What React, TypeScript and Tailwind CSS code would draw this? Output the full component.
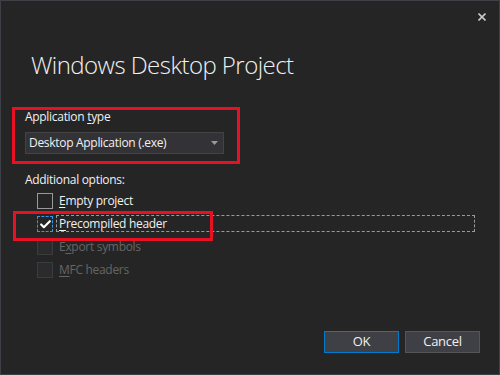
import { Check } from "lucide-react";

const FONT = "font-['Open_Sans','Noto_Sans',sans-serif]";

function Box({ state }: { state: "off" | "on" | "disabled" }) {
  if (state === "on") {
    return (
      <span className="w-[16px] h-[16px] flex items-center justify-center border border-dashed border-[#3a96dd] bg-[#252526]">
        <Check className="w-[13px] h-[13px] text-white" strokeWidth={4} />
      </span>
    );
  }
  if (state === "disabled") {
    return <span className="w-[16px] h-[16px] border border-[#3c3c3f] bg-[#2b2b2e]" />;
  }
  return <span className="w-[16px] h-[16px] border border-[#999999] bg-[#252526]" />;
}

function Option({
  label,
  mn,
  state,
  focused,
}: {
  label: string;
  mn: number;
  state: "off" | "on" | "disabled";
  focused?: boolean;
}) {
  const text = (
    <>
      {label.slice(0, mn)}
      <span className="underline underline-offset-2">{label[mn]}</span>
      {label.slice(mn + 1)}
    </>
  );
  return (
    <div className="flex items-center h-[16px] pl-[36px]">
      <Box state={state} />
      {focused ? (
        <span className="ml-[3px] w-[419px] h-[17px] -mt-[1px] border border-dashed border-[#9a9a9a] pl-[2px] leading-[15px] text-[#f1f1f1]">
          {text}
        </span>
      ) : (
        <span className={"ml-[6px] leading-[16px] " + (state === "disabled" ? "text-[#656565]" : "text-[#f1f1f1]")}>
          {text}
        </span>
      )}
    </div>
  );
}

export default function App() {
  return (
    <div className={"relative w-[500px] h-[375px] bg-[#252526] border border-[#3f3f46] flex flex-col text-[12px] tracking-[-0.3px] text-[#f1f1f1] " + FONT}>
      <div className="flex justify-end pt-[12px] pr-[13px]">
        <svg width="8" height="8" viewBox="0 0 8 8">
          <path d="M0.5 0.5 L7.5 7.5 M7.5 0.5 L0.5 7.5" stroke="#c8c8c8" strokeWidth="1.6" />
        </svg>
      </div>

      <div className="mt-[28px] pl-[30px] text-[24px] leading-[32px] font-light tracking-[-0.55px] text-[#f1f1f1]">
        Windows Desktop Project
      </div>

      <div className="mt-[28px] pl-[24px] leading-[16px]">
        Application <span className="underline underline-offset-2">t</span>ype
      </div>

      <div className="mt-[7px] ml-[24px] w-[199px] h-[22px] flex items-center justify-between bg-[#333337] border border-[#434346] pl-[3px] pr-[5px]">
        <span>Desktop Application (.exe)</span>
        <svg width="7" height="4" viewBox="0 0 7 4">
          <path d="M0 0 H7 L3.5 4 Z" fill="#999999" />
        </svg>
      </div>

      <div className="mt-[18px] pl-[24px] leading-[16px]">Additional options:</div>

      <div className="mt-[5px] flex flex-col gap-[7px]">
        <Option label="Empty project" mn={0} state="off" />
        <Option label="Precompiled header" mn={0} state="on" focused />
        <Option label="Export symbols" mn={1} state="disabled" />
        <Option label="MFC headers" mn={0} state="disabled" />
      </div>

      <div className="mt-auto flex justify-end gap-[6px] pr-[19px] pb-[21px]">
        <button className="w-[75px] h-[22px] bg-[#3f3f46] border border-[#007acc] text-[13px] text-[#f1f1f1]">OK</button>
        <button className="w-[75px] h-[22px] bg-[#3f3f46] border border-[#555555] text-[13px] text-[#f1f1f1]">Cancel</button>
      </div>

      <div className="absolute left-[11px] top-[106px] w-[228px] h-[57px] border-[3px] border-[#e81123]" />
      <div className="absolute left-[12px] top-[210px] w-[200px] h-[30px] border-[3px] border-[#e81123]" />
    </div>
  );
}
